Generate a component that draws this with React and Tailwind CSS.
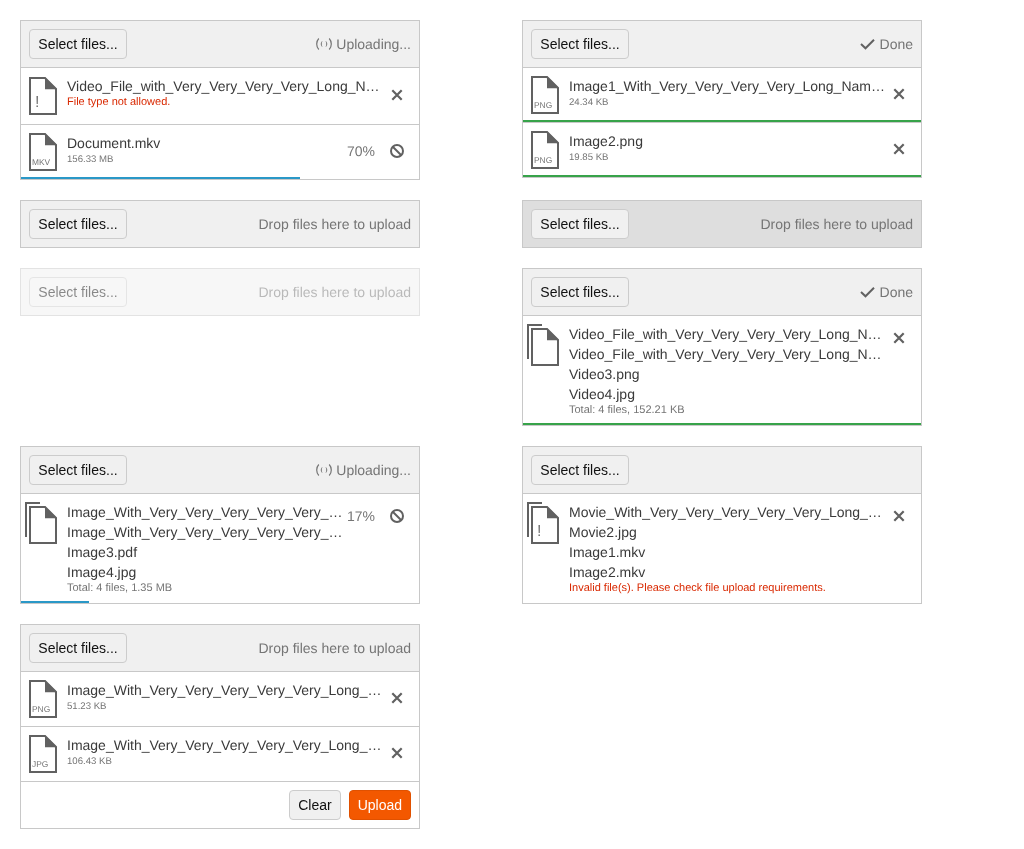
const F = "font-['Liberation_Sans',Arial,sans-serif] [text-rendering:geometricPrecision] [will-change:transform]";

function FileIcon({ label, bang, multi }) {
  return (
    <div className={"relative w-7 h-[38px] shrink-0 mr-[10px] " + (multi ? "mt-1" : "")}>
      <svg width="28" height="38" viewBox="0 0 28 38" className="overflow-visible block">
        <path d="M1 1H16L27 12V37H1Z" fill="#fff" stroke="#616161" strokeWidth="2" />
        <path d="M16 0.5L28 12.200H16Z" fill="#616161" />
        {multi && <path d="M-3 31V-3H11" fill="none" stroke="#616161" strokeWidth="2" />}
      </svg>
      {label && <span className="absolute left-[3px] top-[25px] text-[8.400px] leading-[9px] text-[#757575]">{label}</span>}
      {bang && <span className="absolute left-[6px] top-[16px] text-[16px] leading-5 text-[#757575]">!</span>}
    </div>
  );
}

const X = () => (
  <svg width="28" height="12" viewBox="0 0 28 12" className="block">
    <path d="M9.300 1.300L18.700 10.700M18.700 1.300L9.300 10.700" stroke="#616161" strokeWidth="2.200" />
  </svg>
);

const Ban = () => (
  <svg width="28" height="14" viewBox="0 0 28 14" className="block">
    <circle cx="14" cy="7" r="6" fill="none" stroke="#616161" strokeWidth="2" />
    <path d="M10 3L18 11" stroke="#616161" strokeWidth="2" />
  </svg>
);

function Status({ kind }) {
  if (kind === "up")
    return (
      <span className="flex items-center gap-[4px] text-[#757575]">
        <svg width="16" height="14" viewBox="0 0 16 14">
          <path d="M2.800 1.500C0 4.500 0 9.500 2.800 12.500M13.200 1.500C16 4.500 16 9.500 13.200 12.500" fill="none" stroke="#757575" strokeWidth="1.200" />
          <path d="M6 4.500C5 6 5 8 6 9.500M10 4.500C11 6 11 8 10 9.500" fill="none" stroke="#757575" strokeWidth="1" />
        </svg>
        Uploading...
      </span>
    );
  if (kind === "done")
    return (
      <span className="flex items-center gap-[5px] text-[#757575]">
        <svg width="15" height="12" viewBox="0 0 15 12">
          <path d="M1 6L5.500 10.300L14 1.800" fill="none" stroke="#616161" strokeWidth="2" />
        </svg>
        Done
      </span>
    );
  if (kind === "drop") return <span className="text-[#757575]">Drop files here to upload</span>;
  return null;
}

function Btn({ children, primary, wide }) {
  return (
    <button
      className={
        "h-[30px] px-2 rounded-[4px] border text-sm leading-5 " +
        (wide ? "w-[98px] " : "") +
        (primary ? "bg-[#f35800] border-[#e05100] text-white" : "bg-[#f0f0f0] border-[#cccccc] text-[#111111]")
      }
    >
      {children}
    </button>
  );
}

function Toolbar({ status, hover, border = true }) {
  return (
    <div
      className={
        "h-[46px] px-2 flex items-center justify-between box-content " +
        (hover ? "bg-[#dedede] " : "bg-[#f0f0f0] ") +
        (border ? "border-b border-[#c8c8c8]" : "")
      }
    >
      <Btn wide>Select files...</Btn>
      <Status kind={status} />
    </div>
  );
}

function Bar({ w, color }) {
  return <div className={"absolute left-0 bottom-0 h-[2px] " + color} style={{ width: w }} />;
}

function Single({ name, label, bang, meta, error, pct, bar, barColor, last, tall }) {
  return (
    <div className={"relative flex items-center pl-2 pr-2 " + (tall ? "h-14 " : "h-[54px] ") + (last ? "" : "border-b border-[#c8c8c8] box-content")}>
      <FileIcon label={label} bang={bang} />
      <div className="flex-1 min-w-0 self-start pt-2">
        <div className="truncate text-sm leading-5 text-[#3a3a3a]">{name}</div>
        {error ? (
          <div className="pt-px text-[11px] leading-[11px] text-[#d92800]">{error}</div>
        ) : (
          <div className="pt-px text-[9.600px] leading-[11px] text-[#757575]">{meta}</div>
        )}
      </div>
      {pct && <span className="text-[#757575] text-sm ml-1 mr-2 -mt-[2px]">{pct}</span>}
      <div className={"w-7 shrink-0 " + (pct ? "-mt-[2px]" : "-mt-[3px]")}>{pct ? <Ban /> : <X />}</div>
      {bar && <Bar w={bar} color={barColor} />}
    </div>
  );
}

function Multi({ names, meta, error, pct, bar, barColor }) {
  return (
    <div className="relative flex items-start px-2 py-2">
      <FileIcon multi bang={!!error} />
      <div className="flex-1 min-w-0">
        {names.map((n, i) => (
          <div key={i} className="truncate text-sm leading-5 text-[#3a3a3a]">{n}</div>
        ))}
        <div className={"pt-px pb-px text-[11px] leading-[11px] " + (error ? "text-[#d92800]" : "text-[#757575]")}>{error || meta}</div>
      </div>
      {pct && <span className="text-[#757575] text-sm leading-5 ml-1 mr-2 mt-1">{pct}</span>}
      <div className={"w-7 shrink-0 " + (pct ? "mt-[7px]" : "mt-2")}>{pct ? <Ban /> : <X />}</div>
      {bar && <Bar w={bar} color={barColor} />}
    </div>
  );
}

function Box({ children, className = "" }) {
  return <div className={"border border-[#c8c8c8] bg-white text-sm " + className}>{children}</div>;
}

const G = "bg-[#37a34a]";
const B = "bg-[#2a98c7]";
const LV = "Video_File_with_Very_Very_Very_Very_Long_Name.mkv";
const LI = "Image_With_Very_Very_Very_Very_Very_Long_Name.png";

export default function App() {
  return (
    <div className={"grid grid-cols-[400px_400px] gap-x-[102px] gap-y-5 p-5 items-start " + F}>
      <Box>
        <Toolbar status="up" />
        <Single tall name={LV} bang error="File type not allowed." />
        <Single last name="Document.mkv" label="MKV" meta="156.33 MB" pct="70%" bar={279} barColor={B} />
      </Box>
      <Box>
        <Toolbar status="done" />
        <Single name="Image1_With_Very_Very_Very_Very_Long_Name.png" label="PNG" meta="24.34 KB" bar="100%" barColor={G} />
        <Single last name="Image2.png" label="PNG" meta="19.85 KB" bar="100%" barColor={G} />
      </Box>

      <Box><Toolbar status="drop" border={false} /></Box>
      <Box><Toolbar status="drop" hover border={false} /></Box>

      <Box className="opacity-50"><Toolbar status="drop" border={false} /></Box>
      <Box>
        <Toolbar status="done" />
        <Multi names={[LV, LV, "Video3.png", "Video4.jpg"]} meta="Total: 4 files, 152.21 KB" bar="100%" barColor={G} />
      </Box>

      <Box>
        <Toolbar status="up" />
        <Multi names={[LI, LI, "Image3.pdf", "Image4.jpg"]} meta="Total: 4 files, 1.35 MB" pct="17%" bar={68} barColor={B} />
      </Box>
      <Box>
        <Toolbar />
        <Multi
          names={["Movie_With_Very_Very_Very_Very_Very_Long_Name.mkv", "Movie2.jpg", "Image1.mkv", "Image2.mkv"]}
          error="Invalid file(s). Please check file upload requirements."
        />
      </Box>

      <Box>
        <Toolbar status="drop" />
        <Single name={LI} label="PNG" meta="51.23 KB" />
        <Single name={LI} label="JPG" meta="106.43 KB" />
        <div className="flex justify-end gap-2 px-2 py-2">
          <Btn>Clear</Btn>
          <Btn primary>Upload</Btn>
        </div>
      </Box>
    </div>
  );
}
